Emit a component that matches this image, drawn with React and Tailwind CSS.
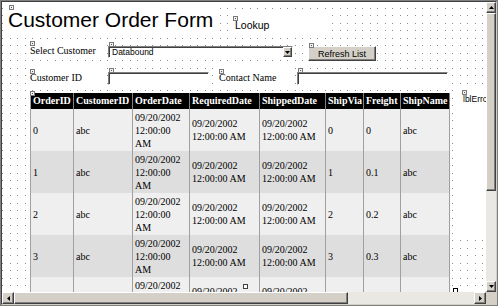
import React from "react";

const serif = "font-['Liberation_Serif','Times_New_Roman',serif]";
const sans = "font-['Liberation_Sans',Arial,sans-serif]";
const raised =
  "border border-t-[#ffffff] border-l-[#ffffff] border-r-[#404040] border-b-[#404040] shadow-[inset_-1px_-1px_0_#808080] bg-[#d4d0c8]";
const sunken =
  "border border-t-[#808080] border-l-[#808080] border-r-[#ffffff] border-b-[#ffffff] shadow-[inset_1px_1px_0_#404040] bg-white";

function Glyph({ className }) {
  return (
    <span
      className={`absolute block w-[5px] h-[5px] border border-[#7a7a7a] bg-[#f2f2f2] ${className}`}
    >
      <span className="absolute left-[1px] top-[1px] w-[1px] h-[1px] bg-[#555]" />
    </span>
  );
}

function Arrow({ dir }) {
  const d = {
    up: "M0 3 L2.5 0 L5 3Z",
    down: "M0 0 L5 0 L2.5 3Z",
    left: "M3 0 L3 5 L0 2.5Z",
    right: "M0 0 L3 2.5 L0 5Z",
  }[dir];
  const w = dir === "up" || dir === "down" ? 5 : 3;
  const h = dir === "up" || dir === "down" ? 3 : 5;
  return (
    <svg width={w} height={h} viewBox={`0 0 ${w} ${h}`}>
      <path d={d} fill="#000" />
    </svg>
  );
}

const cols = [43, 59, 57, 70, 66, 38, 37, 49];
const headers = [
  "OrderID",
  "CustomerID",
  "OrderDate",
  "RequiredDate",
  "ShippedDate",
  "ShipVia",
  "Freight",
  "ShipName",
];
const date = "09/20/2002 12:00:00 AM";
const rows = [0, 1, 2, 3, 4].map((i) => [
  String(i),
  "abc",
  date,
  date,
  date,
  String(i),
  i === 0 ? "0" : `0.${i}`,
  "abc",
]);

function DataGrid() {
  return (
    <table
      className={`table-fixed border-collapse w-[419px] border-l border-[#a0a0a0] ${serif} text-[10px] text-black`}
    >
      <colgroup>
        {cols.map((w, i) => (
          <col key={i} style={{ width: w }} />
        ))}
      </colgroup>
      <thead>
        <tr className="h-[16px] bg-black">
          {headers.map((h) => (
            <th
              key={h}
              className="text-left font-bold text-white pl-[2px] pr-0 whitespace-nowrap overflow-visible border-r border-[#808080] leading-[12px] align-middle"
            >
              {h}
            </th>
          ))}
        </tr>
      </thead>
      <tbody>
        {rows.map((r, ri) => (
          <tr
            key={ri}
            className={ri % 2 === 0 ? "h-[42px] bg-[#efefef]" : "h-[42px] bg-[#dedede]"}
          >
            {r.map((c, ci) => (
              <td
                key={ci}
                className="align-middle text-left pl-[2px] pr-[1px] py-0 leading-[13px] border-r border-[#a0a0a0]"
              >
                {c}
              </td>
            ))}
          </tr>
        ))}
      </tbody>
    </table>
  );
}

function Surface() {
  return (
    <div className="relative overflow-hidden bg-[#8a8a8a] bg-[linear-gradient(90deg,#fff_6px,transparent_6px,transparent_7px,#fff_7px,#fff_13px,transparent_13px,transparent_14px,#fff_14px),linear-gradient(#fff_6px,transparent_6px,transparent_7px,#fff_7px,#fff_13px,transparent_13px,transparent_14px,#fff_14px)] bg-[size:15px_15px] bg-[position:2px_0px]">
      <div className="flex flex-col">
        {/* Row A */}
        <div className="flex items-start shrink-0">
          <div className="relative shrink-0 ml-[5px] mt-[1px] w-[208px] h-[31px] bg-white pl-[1px] pt-[5px]">
            <Glyph className="left-[2px] top-[2px]" />
            <div className={`${sans} text-[21px] leading-[24px] text-black whitespace-nowrap`}>
              Customer Order Form
            </div>
          </div>
          <div className="relative shrink-0 ml-[17px] mt-[12px] w-[100px] h-[20px] bg-white pl-[3px] pt-[5px]">
            <Glyph className="left-[1px] top-[2px]" />
            <div className={`${sans} text-[10.5px] leading-[12px] text-black`}>Lookup</div>
          </div>
        </div>

        {/* Row B */}
        <div className="flex items-start shrink-0 mt-[6px]">
          <div className="relative shrink-0 ml-[26px] w-[73px] h-[19px] bg-white pl-[2px] pt-[5px]">
            <Glyph className="left-[2px] top-[1px]" />
            <div className={`${serif} text-[10px] leading-[12px] text-black whitespace-nowrap`}>
              Select Customer
            </div>
          </div>
          <div className="relative shrink-0 ml-[7px] mt-[6px]">
            <Glyph className="left-[1px] top-[-4px]" />
            <div className={`flex w-[185px] h-[12px] ${sunken}`}>
              <div
                className={`flex-1 flex items-center ${sans} text-[8.5px] leading-[10px] pl-[3px] text-black`}
              >
                Databound
              </div>
              <div className={`w-[9px] h-full flex items-center justify-center ${raised}`}>
                <Arrow dir="down" />
              </div>
            </div>
          </div>
          <div className="relative shrink-0 ml-[15px] mt-[6px]">
            <Glyph className="left-[1px] top-[-3px]" />
            <div
              className={`w-[68px] h-[15px] flex items-center justify-center ${raised} ${sans} text-[9px] leading-[10px] text-black`}
            >
              Refresh List
            </div>
          </div>
        </div>

        {/* Row C */}
        <div className="flex items-start shrink-0 mt-[7px]">
          <div className="relative shrink-0 ml-[26px] w-[73px] h-[18px] bg-white pl-[2px] pt-[4px]">
            <Glyph className="left-[2px] top-[1px]" />
            <div className={`${serif} text-[10px] leading-[12px] text-black whitespace-nowrap`}>
              Customer ID
            </div>
          </div>
          <div className="relative shrink-0 ml-[7px] mt-[4px]">
            <Glyph className="left-[1px] top-[-4px]" />
            <div className={`w-[101px] h-[13px] ${sunken}`} />
          </div>
          <div className="relative shrink-0 ml-[8px] w-[73px] h-[18px] bg-white pl-[2px] pt-[4px]">
            <Glyph className="left-[2px] top-[1px]" />
            <div className={`${serif} text-[10px] leading-[12px] text-black whitespace-nowrap`}>
              Contact Name
            </div>
          </div>
          <div className="relative shrink-0 ml-[7px] mt-[4px]">
            <Glyph className="left-[1px] top-[-4px]" />
            <div className={`w-[151px] h-[13px] ${sunken}`} />
          </div>
        </div>

        {/* Row D */}
        <div className="flex items-start shrink-0 mt-[2px]">
          <div className="relative shrink-0 ml-[28px] mt-[5px]">
            <Glyph className="left-[0px] top-[-2px] z-10" />
            <DataGrid />
          </div>
          <div className="relative shrink-0 ml-[8px] w-[40px] h-[148px] bg-white pl-[5px] pt-[5px]">
            <Glyph className="left-[4px] top-[2px]" />
            <div className={`${sans} text-[8.5px] leading-[12px] text-black whitespace-nowrap`}>
              lblError
            </div>
          </div>
        </div>
      </div>
      {/* selection handles */}
      <span className="absolute left-[241px] top-[282px] w-[5px] h-[5px] border border-[#404040] bg-white" />
      <span className="absolute left-[451px] top-[286px] w-[5px] h-[5px] border border-black bg-white" />
    </div>
  );
}

function VScroll() {
  return (
    <div className="flex flex-col h-full">
      <div className={`h-[11px] shrink-0 flex items-center justify-center ${raised}`}>
        <Arrow dir="up" />
      </div>
      <div className={`h-[178px] shrink-0 ${raised}`} />
      <div className="flex-1 bg-[#eae8e3]" />
      <div className={`h-[11px] shrink-0 flex items-center justify-center ${raised}`}>
        <Arrow dir="down" />
      </div>
    </div>
  );
}

function HScroll() {
  return (
    <div className="flex h-full">
      <div className={`w-[12px] shrink-0 flex items-center justify-center ${raised}`}>
        <Arrow dir="left" />
      </div>
      <div className={`w-[334px] shrink-0 ${raised}`} />
      <div className="flex-1 bg-[#eae8e3]" />
      <div className={`w-[12px] shrink-0 flex items-center justify-center ${raised}`}>
        <Arrow dir="right" />
      </div>
    </div>
  );
}

export default function App() {
  return (
    <div className="w-[498px] h-[306px] border border-[#808080] bg-[#d4d0c8] overflow-hidden">
      <div className="w-full h-full border border-t-[#404040] border-l-[#404040] border-r-[#d4d0c8] border-b-[#d4d0c8] grid grid-cols-[1fr_10px] grid-rows-[1fr_12px]">
        <Surface />
        <VScroll />
        <HScroll />
        <div className="bg-[#d4d0c8]" />
      </div>
    </div>
  );
}
